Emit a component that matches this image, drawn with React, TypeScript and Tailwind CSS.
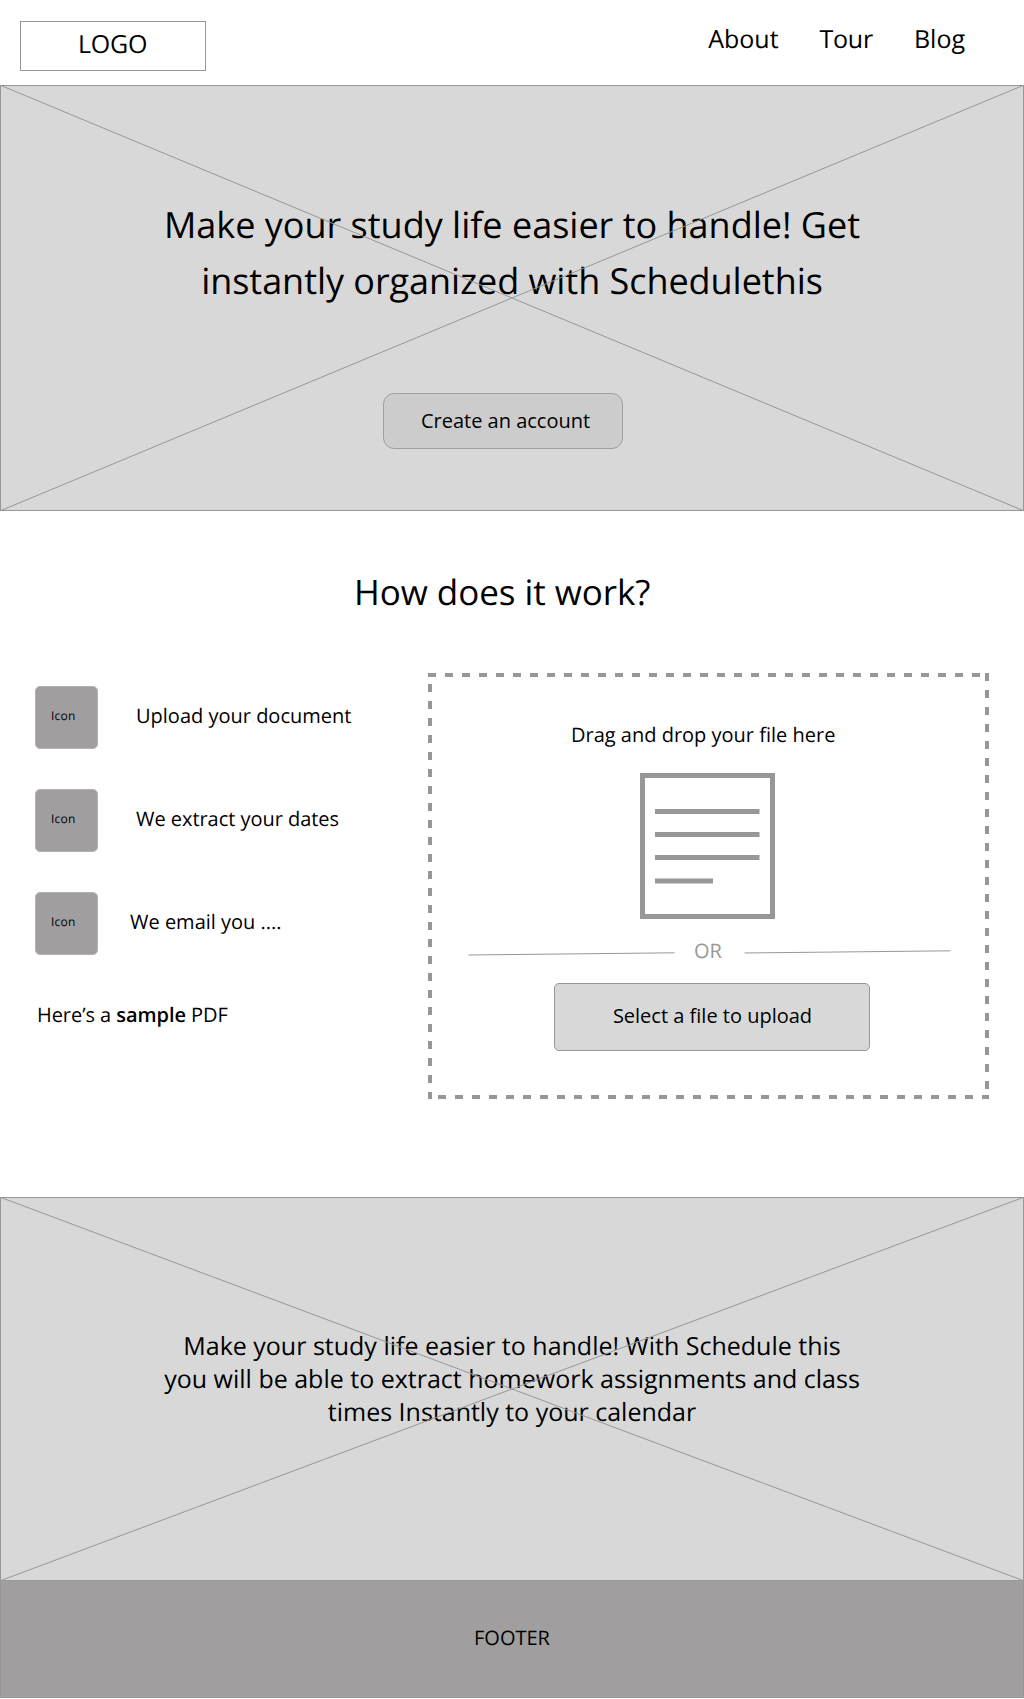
import React from "react";

function Cross({ height }: { height: number }) {
  return (
    <svg
      className="pointer-events-none absolute -inset-px"
      width="1024"
      height={height}
      viewBox={`0 0 1024 ${height}`}
      fill="none"
      stroke="#979797"
    >
      <path d={`M1 .5L1023 ${height - 0.5}M1023 .5L1 ${height - 0.5}`} />
    </svg>
  );
}

function Step({ children, gap }: { children: React.ReactNode; gap: string }) {
  return (
    <div className={`flex h-[63px] ${gap}`}>
      <div className="h-[63px] w-[63px] rounded-[5px] border border-[#b4b3b4] bg-[#a09e9f] pl-[15px] pt-[20px] text-[12px] leading-[17px] tracking-[0.25px]">
        Icon
      </div>
      <p className="whitespace-nowrap pt-[16px] text-[20px] leading-[27px]">{children}</p>
    </div>
  );
}

function DashedFrame() {
  return (
    <svg className="pointer-events-none absolute inset-0" width="561" height="426" stroke="#979797" strokeWidth="4" strokeDasharray="8 9">
      <path d="M0 2H561" />
      <path d="M559 0V426" />
      <path d="M562 424H0" />
      <path d="M2 427V0" />
    </svg>
  );
}

export default function App() {
  return (
    <div className="flex h-[1699px] w-[1024px] flex-col overflow-hidden bg-white font-['Open_Sans',sans-serif] text-black [text-rendering:geometricPrecision]">
      <header className="flex h-[85px] shrink-0 justify-between pl-5 pr-[59px]">
        <div className="mt-[21px] h-[50px] w-[186px] border border-[#979797] pl-[57px] pt-[5px] text-[25px] leading-[34px] tracking-[-0.2px]">LOGO</div>
        <nav className="flex gap-[41px] pt-[22px] text-[25px] leading-[34px]">
          <a>About</a>
          <a className="tracking-[-0.25px]">Tour</a>
          <a>Blog</a>
        </nav>
      </header>

      <section className="relative flex h-[426px] shrink-0 flex-col items-center border border-[#979797] bg-[#d8d8d8]">
        <h1 className="mt-[111px] whitespace-nowrap text-center text-[36px] leading-[56px]">
          Make your study life easier to handle! Get
          <br />
          <span className="tracking-[-0.04px]">instantly organized with Schedulethis</span>
        </h1>
        <Cross height={426} />
        <button className="relative mr-[18px] mt-[84px] h-[56px] w-[240px] rounded-[11px] border border-[#a0a0a0] bg-[#cccccc] pb-[2px] pl-[5px] text-[20px] leading-[27px]">
          Create an account
        </button>
      </section>

      <main className="flex h-[686px] shrink-0 flex-col">
        <h2 className="ml-[354px] mt-[58px] text-[35px] leading-[48px] tracking-[-0.06px]">How does it work?</h2>
        <div className="mt-[56px] flex">
          <div className="flex w-[393px] flex-col gap-[40px] pl-[35px] pt-[13px]">
            <Step gap="gap-[38px]">Upload your document</Step>
            <Step gap="gap-[38px]">
              <span className="tracking-[-0.04px]">We extract your dates</span>
            </Step>
            <Step gap="gap-[32px]">We email you ....</Step>
            <p className="ml-[2px] mt-[6px] text-[20px] leading-[27px] tracking-[-0.06px]">
              Here’s a <span className="font-semibold">sample</span> PDF
            </p>
          </div>
          <div className="relative ml-[35px] flex h-[426px] w-[561px] flex-col">
            <DashedFrame />
            <p className="ml-[143px] mt-[48px] text-[20px] leading-[27px]">Drag and drop your file here</p>
            <svg className="ml-[212px] mt-[25px]" width="135" height="146" fill="none" stroke="#979797" strokeWidth="5">
              <path d="M2.5 2.5H132.5V143.5H2.5Z" />
              <path d="M15 38.5H119.5M15 61.5H119.5M15 84.5H119.5M15 108H73" />
            </svg>
            <div className="ml-[40px] mt-[18px] flex h-[28px]">
              <svg width="208" height="28" stroke="#979797">
                <path d="M.5 18L206.5 15.8" />
              </svg>
              <span className="ml-[18px] w-[50px] text-[20px] leading-[27px] text-[#979797]">OR</span>
              <svg width="208" height="28" stroke="#979797">
                <path d="M.5 16L206.5 13.8" />
              </svg>
            </div>
            <button className="ml-[126px] mt-[18px] h-[68px] w-[316px] rounded-[5px] border border-[#979797] bg-[#d8d8d8] pb-[4px] pl-[1px] text-[20px] leading-[27px]">
              Select a file to upload
            </button>
          </div>
        </div>
      </main>

      <section className="relative h-[384px] shrink-0 border border-[#979797] bg-[#d8d8d8]">
        <p className="mt-[132px] whitespace-nowrap text-center text-[25px] leading-[33px]">
          Make your study life easier to handle! With Schedule this
          <br />
          you will be able to extract homework assignments and class
          <br />
          times Instantly to your calendar
        </p>
        <Cross height={384} />
      </section>
      <footer className="relative -mt-px flex h-[118px] shrink-0 items-center justify-center border border-[#979797] bg-[#a09e9f] pb-[3px] text-[20px] leading-[27px]">
        FOOTER
      </footer>
    </div>
  );
}
